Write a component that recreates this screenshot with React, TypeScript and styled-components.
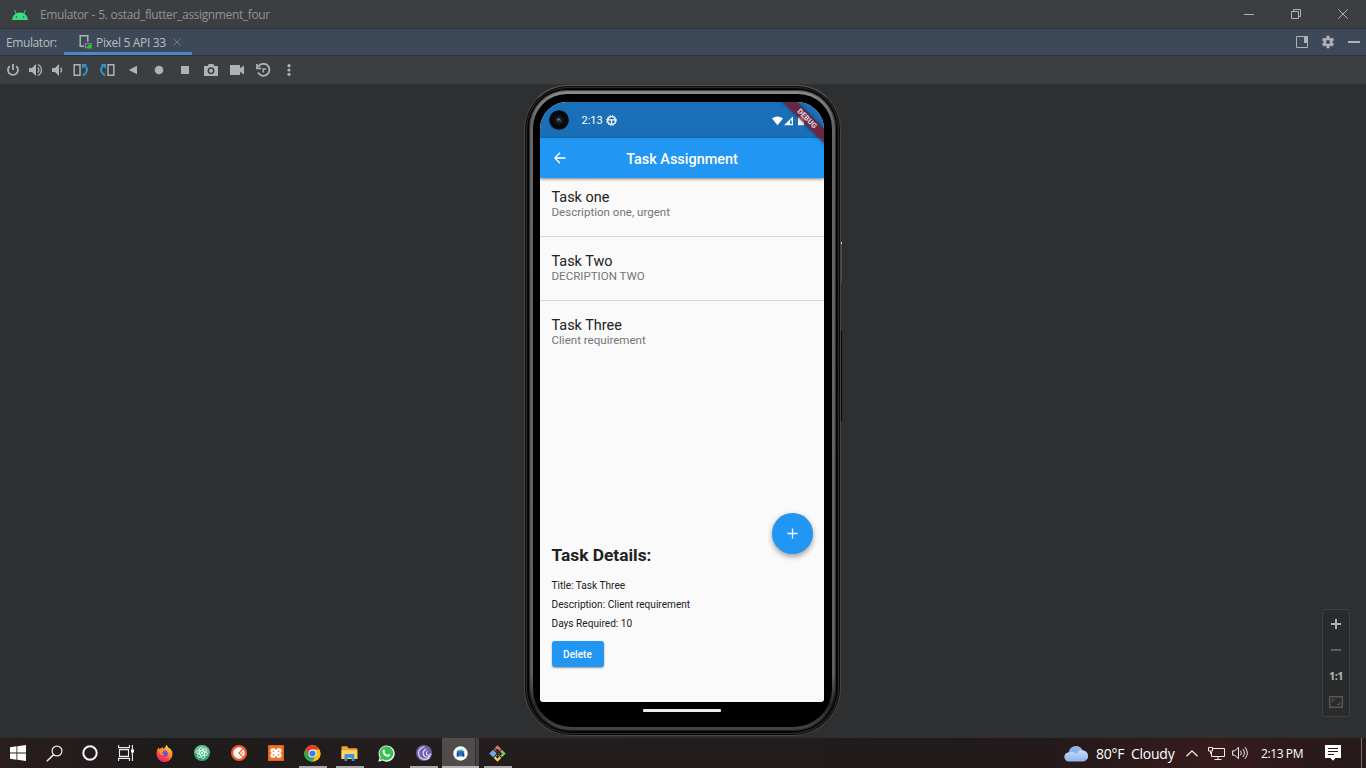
import React from "react";
import styled, { createGlobalStyle, css } from "styled-components";

const Global = createGlobalStyle`
  * { box-sizing: border-box; }
  body { margin: 0; background: #2d2f31; overflow: hidden; }
  svg { display: block; flex: none; }
`;

const Desktop = styled.div`
  width: 1366px;
  height: 768px;
  display: flex;
  flex-direction: column;
  background: #2d2f31;
  font-family: "Open Sans", "Noto Sans", sans-serif;
`;

/* ---------- IDE window chrome ---------- */

const TitleBar = styled.header`
  height: 29px;
  flex: none;
  display: flex;
  align-items: center;
  padding-left: 12px;
  background: #3c3f41;
  border-bottom: 1px solid #323232;
`;

const WindowTitle = styled.span`
  margin-left: 12px;
  padding-top: 2px;
  font-size: 12px;
  line-height: 16px;
  letter-spacing: -0.36px;
  word-spacing: 0.4px;
  color: #92928f;
  white-space: pre;
`;

const WindowButtons = styled.div`
  margin-left: auto;
  display: flex;
`;

const Slot = styled.div<{ $w: number }>`
  width: ${(p) => p.$w}px;
  flex: none;
  display: flex;
  align-items: center;
  justify-content: center;
`;

const TabBar = styled.nav`
  height: 27px;
  flex: none;
  display: flex;
  align-items: center;
  padding-left: 6px;
  background: #3d4958;
  border-bottom: 1px solid #323232;
  color: #bbbdbf;
  font-size: 12px;
  letter-spacing: -0.4px;
`;

const TabLabel = styled.span`
  width: 58px;
  padding-top: 2px;
  line-height: 16px;
  white-space: nowrap;
`;

const Tab = styled.div`
  width: 128px;
  height: 26px;
  padding: 0 9px 0 15px;
  display: flex;
  align-items: center;
  box-shadow: inset 0 -3px 0 #4a88c7;
  white-space: nowrap;
`;

const TabName = styled.span`
  width: 77px;
  margin-left: 4px;
  padding-top: 2px;
  line-height: 16px;
  letter-spacing: -0.33px;
`;

const TabActions = styled.div`
  margin-left: auto;
  display: flex;
`;

const ToolBar = styled.div`
  height: 28px;
  flex: none;
  display: flex;
  align-items: center;
  padding-left: 2px;
  background: #3c3f41;
`;

const Stage = styled.main`
  height: 654px;
  flex: none;
  display: flex;
  padding-left: 524px;
  border-top: 1px solid #313335;
`;

const ZoomPanel = styled.aside`
  width: 28px;
  height: 108px;
  margin: 524px 16px 0 auto;
  padding: 1px 0;
  border: 1px solid #3d3f40;
  border-radius: 3px;
  background: #2a2b2c;
  display: flex;
  flex-direction: column;
`;

const ZoomItem = styled.div`
  height: 26px;
  display: flex;
  align-items: center;
  justify-content: center;
  padding-bottom: 1px;
  color: #b4b4b4;
  font: bold 11px "Open Sans", sans-serif;
  letter-spacing: -0.5px;
`;

/* ---------- Phone ---------- */

const PhoneShell = styled.div`
  position: relative;
  width: 317px;
  height: 651px;
  padding: 4px 5px 4px 4px;
  border-radius: 44px 44px 48px 48px;
  border: 1px solid #464646;
  border-top-color: #585858;
  background: #050505;
  box-shadow: inset 0 0 0 1px #0b0b0b, inset 0 0 0 2px #2c2c2c, inset 0 0 0 3px #080808;
`;

const PhoneRim = styled.div`
  width: 307px;
  height: 641px;
  padding: 4px;
  border-radius: 38px 38px 42px 42px;
  background: linear-gradient(180deg, #8e8e8e 0, #666 5%, #606060 91%, #262626 96%, #484848 100%);
  box-shadow: inset 0 0 1px 1px rgba(0, 0, 0, 0.6);
`;

const PhoneGlass = styled.div`
  width: 299px;
  height: 633px;
  padding: 8px 7px 0 7px;
  border-radius: 34px 34px 38px 38px;
  background: #000;
`;

const SideKey = styled.i<{ $top: number; $h: number; $c: string }>`
  position: absolute;
  right: -2px;
  top: ${(p) => p.$top}px;
  width: 1px;
  height: ${(p) => p.$h}px;
  background: ${(p) => p.$c};
`;

const Screen = styled.div`
  position: relative;
  width: 284px;
  height: 600px;
  overflow: hidden;
  border-radius: 27px 27px 3px 3px;
  background: #fafafa;
  color: #212121;
  font-family: Roboto, sans-serif;
  display: flex;
  flex-direction: column;
`;

const StatusBar = styled.div`
  height: 36px;
  flex: none;
  padding: 0 18px 0 9px;
  display: flex;
  align-items: center;
  background: #1a70b8;
  color: #fff;
  font-size: 11px;
`;

const Clock = styled.span`
  width: 20px;
  margin: 2px 4px 0 12.5px;
  line-height: 14px;
`;

const StatusIcons = styled.div`
  margin-left: auto;
  display: flex;
  align-items: center;
  padding-top: 1px;
`;

const AppBar = styled.div`
  position: relative;
  height: 40px;
  flex: none;
  display: flex;
  align-items: center;
  justify-content: center;
  background: #2196f3;
  color: #fff;
  font-size: 14.45px;
  font-weight: 500;
  padding-top: 2px;
  box-shadow: 0 1px 3px rgba(0, 0, 0, 0.5);
`;

const BackButton = styled.div`
  position: absolute;
  left: 14px;
  top: 14px;
`;

const TaskList = styled.ul`
  height: 359px;
  margin: 0;
  padding: 0;
  list-style: none;
`;

const TaskRow = styled.li<{ $first?: boolean; $last?: boolean }>`
  height: ${(p) => (p.$first ? 59 : 64)}px;
  padding: ${(p) => (p.$first ? 12 : 17)}px 11.5px 0;
  ${(p) =>
    !p.$last &&
    css`
      border-bottom: 1px solid #d9d9d9;
    `}
`;

const TaskTitle = styled.div`
  font-size: 14.45px;
  line-height: 16px;
`;

const TaskNote = styled.div`
  margin-top: -1px;
  font-size: 11.56px;
  line-height: 14px;
  color: #757575;
`;

const Details = styled.section`
  padding: 7px 11.5px 0;
`;

const DetailsHeading = styled.h2`
  margin: 0 0 10px;
  font-size: 17.34px;
  line-height: 22px;
  font-weight: 700;
`;

const DetailsLine = styled.p`
  margin: 0;
  font-size: 10.12px;
  line-height: 19px;
`;

const DeleteButton = styled.button`
  display: block;
  width: 52px;
  height: 26px;
  margin-top: 8px;
  padding: 0;
  border: 0;
  border-radius: 3px;
  background: #2196f3;
  color: #fff;
  font: 500 10.12px Roboto, sans-serif;
  box-shadow: 0 1px 2px rgba(0, 0, 0, 0.4);
`;

const Fab = styled.div`
  position: absolute;
  right: 11.5px;
  top: 411px;
  width: 40.5px;
  height: 40.5px;
  border-radius: 50%;
  background: #2196f3;
  display: flex;
  align-items: center;
  justify-content: center;
  box-shadow: 0 3px 5px rgba(0, 0, 0, 0.28), 0 1px 7px rgba(0, 0, 0, 0.1);
`;

const DebugRibbon = styled.div`
  position: absolute;
  left: 227px;
  top: 12px;
  width: 80px;
  height: 9.5px;
  transform: rotate(45deg);
  background: rgba(130, 16, 30, 0.76);
  box-shadow: 0 0 4px rgba(0, 0, 0, 0.45);
  color: #d3c6cd;
  font-size: 7.6px;
  font-weight: 900;
  line-height: 10px;
  text-align: center;
`;

const HomeBar = styled.div`
  width: 78px;
  height: 3px;
  margin: 7px 0 0 103px;
  border-radius: 1px;
  background: #ececec;
`;

/* ---------- Windows taskbar ---------- */

const TaskBar = styled.footer`
  height: 30px;
  flex: none;
  display: flex;
  align-items: stretch;
  background: linear-gradient(90deg, #2a1d1d 0, #1e1b1b 12%, #241d1d 28%, #231c1c 55%, #201a1b 70%, #271a1b 80%, #371b1d 89%, #2c1a1b 95%, #261a1b 100%);
  color: #fff;
`;

const PinnedApps = styled.div`
  display: flex;
  margin-left: 2px;
`;

const AppSlot = styled.div<{ $running?: boolean; $active?: boolean }>`
  width: 37px;
  display: flex;
  align-items: center;
  justify-content: center;
  ${(p) =>
    p.$running &&
    css`
      background: linear-gradient(#aaa7a7, #aaa7a7) center bottom / 28px 2px no-repeat;
    `}
  ${(p) =>
    p.$active &&
    css`
      background: linear-gradient(#b5b2b2, #b5b2b2) left bottom / 100% 2px no-repeat,
        linear-gradient(90deg, #514c4c 0 33px, #322d2d 33px 34px, #474242 34px);
    `}
`;

const Tray = styled.div`
  margin-left: auto;
  display: flex;
  align-items: center;
`;

const Weather = styled.span`
  width: 88px;
  padding-left: 7px;
  font-size: 14px;
  letter-spacing: -0.25px;
  white-space: pre;
`;

const TrayClock = styled.span`
  width: 60px;
  padding-left: 5px;
  font-size: 12px;
  letter-spacing: -0.4px;
  white-space: nowrap;
`;

const ShowDesktop = styled.i`
  align-self: stretch;
  width: 5px;
  border-left: 1px solid #75696a;
`;

const G = "#afb1b3";

const AndroidHead = () => (
  <svg width="16" height="11" viewBox="0 0 16 11">
    <path d="M0 11a8 7.5 0 0 1 16 0z" fill="#3ddc84" />
    <path d="M4.2 5 2.6 1M11.8 5l1.6-4" stroke="#3ddc84" strokeWidth=".9" />
    <circle cx="4.4" cy="8" r=".8" fill="#3c3f41" />
    <circle cx="11.6" cy="8" r=".8" fill="#3c3f41" />
  </svg>
);

const toolIcons: { w: number; node: React.ReactNode }[] = [
  {
    w: 22,
    node: (
      <svg width="14" height="14" viewBox="0 0 14 14" fill="none" stroke={G} strokeWidth="1.8">
        <path d="M3.7 3.2a5 5 0 1 0 6.6 0M7 1v6" />
      </svg>
    ),
  },
  {
    w: 23,
    node: (
      <svg width="14" height="14" viewBox="0 0 14 14">
        <path d="M0 5h3l4-4v12L3 9H0z" fill={G} />
        <path d="M8.6 4.5a3 3 0 0 1 0 5M8.8 1.7a5.7 5.7 0 0 1 0 10.6" fill="none" stroke={G} strokeWidth="1.3" />
      </svg>
    ),
  },
  {
    w: 21,
    node: (
      <svg width="12" height="14" viewBox="0 0 12 14">
        <path d="M0 5h3l4-4v12L3 9H0z" fill={G} />
        <path d="M8.6 4.6q2 2.4 0 4.8" fill="none" stroke={G} strokeWidth="1.3" />
      </svg>
    ),
  },
  {
    w: 26,
    node: (
      <svg width="16" height="14" viewBox="0 0 16 14" fill="none">
        <path d="M1.200 1.700h5.800v10.600H1.200z" stroke={G} strokeWidth="1.500" />
        <path d="M11.500 2.300Q17.200 7.500 10 12.600" stroke="#3592c4" strokeWidth="2" />
        <path d="M9 1h5.200L9 6z" fill="#3592c4" />
      </svg>
    ),
  },
  {
    w: 26,
    node: (
      <svg width="16" height="14" viewBox="0 0 16 14" fill="none">
        <path d="M9 1.700h5.800v10.600H9z" stroke={G} strokeWidth="1.500" />
        <path d="M4.500 2.300Q-1.200 7.500 6 12.600" stroke="#3592c4" strokeWidth="2" />
        <path d="M7 1H1.800L7 6z" fill="#3592c4" />
      </svg>
    ),
  },
  {
    w: 26,
    node: (
      <svg width="10" height="10" viewBox="0 0 10 10">
        <path d="M.8 5 9 .8v8.4z" fill={G} />
      </svg>
    ),
  },
  {
    w: 26,
    node: (
      <svg width="10" height="10" viewBox="0 0 10 10">
        <circle cx="5" cy="5" r="4.3" fill={G} />
      </svg>
    ),
  },
  {
    w: 26,
    node: (
      <svg width="8" height="8" viewBox="0 0 8 8">
        <path d="M0 0h8v8H0z" fill={G} />
      </svg>
    ),
  },
  {
    w: 26,
    node: (
      <svg width="14" height="12" viewBox="0 0 14 12">
        <path d="M0 2h3.5l1.3-2h4.4l1.3 2H14v10H0z" fill={G} />
        <circle cx="7" cy="6.8" r="2.7" fill="none" stroke="#3c3f41" strokeWidth="1.5" />
      </svg>
    ),
  },
  {
    w: 26,
    node: (
      <svg width="14" height="10" viewBox="0 0 14 10">
        <path d="M0 0h10v3.3L14 .5v9l-4-2.8V10H0z" fill={G} />
      </svg>
    ),
  },
  {
    w: 26,
    node: (
      <svg width="15" height="14" viewBox="0 0 15 14" fill="none" stroke={G}>
        <path d="M2.2 3.8A6 6 0 1 1 2 9.4" strokeWidth="1.8" />
        <path d="M.9 1v4.3h4.3" strokeWidth="1.7" />
        <path d="M7.2 9.500V6H10" strokeWidth="1.4" />
      </svg>
    ),
  },
  {
    w: 26,
    node: (
      <svg width="4" height="12" viewBox="0 0 4 12" fill={G}>
        <circle cx="2" cy="1.7" r="1.6" />
        <circle cx="2" cy="6" r="1.6" />
        <circle cx="2" cy="10.3" r="1.6" />
      </svg>
    ),
  },
];

const Start = () => (
  <svg width="16" height="16" viewBox="0 0 16 16" fill="#fff">
    <path d="M0 2.3 6.5 1.3v6.3H0zM7.3 1.2 16 0v7.6H7.3zM0 8.4h6.5v6.3L0 13.7zM7.3 8.4H16V16l-8.7-1.2z" />
  </svg>
);
const Search = () => (
  <svg width="17" height="17" viewBox="0 0 17 17" fill="none" stroke="#eee" strokeWidth="1.2">
    <circle cx="11" cy="6" r="4.9" />
    <path d="M7.6 9.6.8 16.2" strokeWidth="1.5" />
  </svg>
);
const Cortana = () => (
  <svg width="16" height="16" viewBox="0 0 16 16">
    <circle cx="8" cy="8" r="6.7" fill="none" stroke="#f5f5f5" strokeWidth="2" />
  </svg>
);
const TaskView = () => (
  <svg width="16" height="16" viewBox="0 0 16 16" fill="none" stroke="#eee" strokeWidth="1.1">
    <path d="M.6 0v2.6h10.8V0M.6 16v-2.6h10.8V16M1.5 4.6h9v6.8h-9zM14.4 0v16" />
    <path d="M13 4.5h3v3h-3z" fill="#fff" stroke="none" />
  </svg>
);

const Firefox = () => (
  <svg width="17" height="17" viewBox="0 0 17 17">
    <defs>
      <linearGradient id="ff" x1=".8" y1="0" x2=".25" y2="1">
        <stop offset="0" stopColor="#ffe14a" />
        <stop offset=".45" stopColor="#ff8b22" />
        <stop offset=".75" stopColor="#fb3a4c" />
        <stop offset="1" stopColor="#e31587" />
      </linearGradient>
    </defs>
    <path d="M10.2 0q1.5 1 2 2.4Q16.5 4.8 16.5 9a8 8 0 0 1-16 .2Q.4 5 2.5 2.3l.5 1.8q1-.9 2.2-.9.4-1 1.2-1.5 0 1.4 1.1 2.1Q10 3 10.2 0z" fill="url(#ff)" />
    <path d="M6 6.2q3-2 5.3.5 1.4 2-.2 4.2Q8.7 12.8 6 11 4.2 9.2 5 7l2 .4z" fill="#8446d8" />
    <path d="M3 5.6q2-1.2 4 .4l1 1-2.3.8Q6.5 10 9 9.3q-1.6 2-4 .5Q3 8 3 5.6z" fill="#ff9b25" />
  </svg>
);
const Atom = () => (
  <svg width="16" height="16" viewBox="0 0 16 16">
    <circle cx="8" cy="8" r="8" fill="#36a473" />
    <path d="M0 8a8 8 0 0 1 16 0q-8 3-16 0z" fill="#8fd0ad" opacity=".55" />
    <g fill="none" stroke="#e3fff1" strokeWidth=".9">
      <ellipse cx="8" cy="8" rx="5.7" ry="2.3" transform="rotate(15 8 8)" />
      <ellipse cx="8" cy="8" rx="5.7" ry="2.3" transform="rotate(75 8 8)" />
      <ellipse cx="8" cy="8" rx="5.7" ry="2.3" transform="rotate(135 8 8)" />
    </g>
    <circle cx="8" cy="8" r="1" fill="#fff" />
  </svg>
);
const ClockApp = () => (
  <svg width="16" height="16" viewBox="0 0 16 16">
    <circle cx="8" cy="8" r="8" fill="#f4592b" />
    <circle cx="8" cy="8" r="5.700" fill="#fff" />
    <path d="M12.500 3.600 8 8l4.500 4.400" fill="none" stroke="#f4592b" strokeWidth="1.200" />
    <circle cx="11.500" cy="8" r="1" fill="#f79a7c" />
  </svg>
);
const Xampp = () => (
  <svg width="16" height="16" viewBox="0 0 16 16">
    <rect width="16" height="16" rx="1.5" fill="#f37623" />
    <path d="M.7.7h14.6v14.6H.7z" fill="none" stroke="#dd5e12" strokeWidth="1" />
    <path
      d="M4.700 3.300h1.600L8 5l1.700-1.700h1.600q2.300 0 2.300 2.200 0 1.600-1.300 2.500 1.300.9 1.300 2.500 0 2.200-2.300 2.200H9.700L8 11l-1.700 1.700H4.700q-2.300 0-2.300-2.200 0-1.600 1.300-2.500-1.300-.9-1.300-2.500 0-2.200 2.300-2.200z"
      fill="#fff"
    />
    <path d="M4.700 5.700h1.600v1.100H4.700zM9.700 5.700h1.600v1.100H9.700zM4.700 9.300h1.600v1.100H4.700zM9.700 9.300h1.600v1.100H9.700z" fill="#f37623" />
  </svg>
);
const Chrome = () => (
  <svg width="17" height="17" viewBox="0 0 17 17">
    <circle cx="8.5" cy="8.500" r="8.200" fill="#fbc116" />
    <path d="M1.400 4.400A8.200 8.200 0 0 1 15.600 4.400H8.500L5 10.500z" fill="#e33b2e" />
    <path d="M1.400 4.400A8.200 8.200 0 0 0 8.200 16.700L12 10.500 5 10.600z" fill="#2da94f" />
    <circle cx="8.500" cy="8.500" r="4" fill="#fff" />
    <circle cx="8.500" cy="8.500" r="3.100" fill="#3d7df0" />
  </svg>
);
const Explorer = () => (
  <svg width="17" height="15" viewBox="0 0 17 15">
    <path d="M.5 1Q.5.300 1.200.300h5l1.300 2h8q.8 0 .8.800V13H.5z" fill="#e9a82c" />
    <path d="M.5 4.200h15.800V13H.5z" fill="#fdd264" />
    <path d="M3.500 15V9q0-1 1-1h7.800q1 0 1 1v6h-2.600v-3.200H6.100V15z" fill="#3b93dc" />
  </svg>
);
const WhatsApp = () => (
  <svg width="17" height="17" viewBox="0 0 17 17">
    <path d="M.3 16.700 1.500 12.400A8.100 8.100 0 1 1 4.600 15.600z" fill="#f3f3f3" />
    <path d="M1.900 15.100 2.700 12.200A6.900 6.900 0 1 1 5 14.300z" fill="#37c351" />
    <path d="M5.200 4.700q.8-.8 1.300.1l.6 1.400-.7 1q1 2 2.900 2.700l.9-1 1.900.9q-.1 2-2.100 2-4.900-.7-5.500-5-.1-1.300.7-2.100z" fill="#fff" />
  </svg>
);
const BitTorrent = () => (
  <svg width="16" height="16" viewBox="0 0 16 16" fill="none">
    <circle cx="8" cy="8" r="8" fill="#6e60a8" />
    <g stroke="#ded8f2" strokeWidth="1.200">
      <path d="M8.500 2A6 6 0 0 0 9 14.400Q11.500 14.500 13.500 12.800" />
      <path d="M10.200 4.200A4.200 4.200 0 0 0 10 12.200Q12.500 12.500 14.500 11" />
      <path d="M11.500 6.200A2.300 2.300 0 0 0 11.300 10Q13.500 10.500 15.300 9" />
    </g>
  </svg>
);
const Studio = () => (
  <svg width="15" height="15" viewBox="0 0 15 15">
    <circle cx="7.500" cy="7.500" r="7.200" fill="#fff" />
    <path d="M3.800 4.800h7.400v5.700H3.800z" fill="#2f7fd8" />
    <path d="M5 3.600h5v1.600H5z" fill="#4fb987" />
    <path d="M3.800 7.500 5.500 6v4.500H3.800zM9.500 6l1.700 1.500v3H9.500z" fill="#1d4468" />
    <circle cx="7.500" cy="7" r="1.700" fill="#1a6dcc" />
  </svg>
);
const Git = () => (
  <svg width="17" height="17" viewBox="0 0 17 17">
    <g transform="rotate(45 8.500 8.500)">
      <path d="M2.700 2.700h5.300v5.300H2.700z" fill="#ef6a6a" />
      <path d="M9 2.700h5.300v5.300H9z" fill="#86c75a" />
      <path d="M2.700 9h5.300v5.300H2.700z" fill="#70a7ec" />
      <path d="M9 9h5.300v5.300H9z" fill="#f3d05e" />
    </g>
    <g stroke="#2b1d1a" strokeWidth="1" fill="#2b1d1a">
      <path d="M5.500 3 11.500 8.500M8.500 5.500v7" />
      <circle cx="8.500" cy="5.500" r="1" />
      <circle cx="8.500" cy="11.800" r="1" />
      <circle cx="11.500" cy="8.700" r="1" />
    </g>
  </svg>
);

const apps = [
  { icon: <Firefox /> },
  { icon: <Atom /> },
  { icon: <ClockApp /> },
  { icon: <Xampp /> },
  { icon: <Chrome />, running: true },
  { icon: <Explorer />, running: true },
  { icon: <WhatsApp /> },
  { icon: <BitTorrent />, running: true },
  { icon: <Studio />, active: true },
  { icon: <Git />, running: true },
];

const tasks = [
  { title: "Task one", note: "Description one, urgent" },
  { title: "Task Two", note: "DECRIPTION TWO" },
  { title: "Task Three", note: "Client requirement" },
];

const CameraHole = () => (
  <svg width="20" height="20" viewBox="0 0 20 20">
    <circle cx="10" cy="10" r="9.800" fill="#08090a" />
    <circle cx="10" cy="10" r="5" fill="#14151a" />
    <circle cx="10" cy="10" r="2.600" fill="#262b3d" />
    <circle cx="9.600" cy="9.600" r="1" fill="#8c93b0" />
    <circle cx="11.500" cy="11" r=".6" fill="#565d80" />
  </svg>
);

function Phone() {
  return (
    <PhoneShell>
      <SideKey $top={156} $h={2} $c="#ddd" />
      <SideKey $top={158} $h={39} $c="#4c4c4c" />
      <SideKey $top={245} $h={90} $c="#050505" />
      <PhoneRim>
        <PhoneGlass>
          <Screen>
            <StatusBar>
              <CameraHole />
              <Clock>2:13</Clock>
              <svg width="11" height="11" viewBox="0 0 10 10" fill="none" stroke="#fff">
                <circle cx="5" cy="5" r="3.600" strokeWidth="1.200" />
                <circle cx="5" cy="5" r="4.500" strokeWidth=".9" strokeDasharray="1.200 1.156" />
                <path d="M1.500 4.500h7M5 4.500V8.500" strokeWidth="1.100" />
              </svg>
              <StatusIcons>
                <svg width="34" height="10" viewBox="0 0 34 10">
                  <path d="M0 2.600Q5.500-1.600 11 2.600L5.500 9.300z" fill="#fff" />
                  <path d="M12 9.300 21 .4v8.900z" fill="#fff" />
                  <path d="M18 4.500h1.700v3.600H18z" fill="#1a70b8" />
                  <path d="M26 1.300h1.500V.2h3v1.100H32v8h-6z" fill="#fff" />
                </svg>
              </StatusIcons>
            </StatusBar>
            <AppBar>
              <BackButton>
                <svg width="12" height="12" viewBox="0 0 12 12" fill="none" stroke="#fff" strokeWidth="1.400">
                  <path d="M11.500 6H1M6 .8.900 6 6 11.200" />
                </svg>
              </BackButton>
              Task Assignment
            </AppBar>
            <TaskList>
              {tasks.map((t, i) => (
                <TaskRow key={t.title} $first={i === 0} $last={i === tasks.length - 1}>
                  <TaskTitle>{t.title}</TaskTitle>
                  <TaskNote>{t.note}</TaskNote>
                </TaskRow>
              ))}
            </TaskList>
            <Details>
              <DetailsHeading>Task Details:</DetailsHeading>
              <DetailsLine>Title: Task Three</DetailsLine>
              <DetailsLine>Description: Client requirement</DetailsLine>
              <DetailsLine>Days Required: 10</DetailsLine>
              <DeleteButton>Delete</DeleteButton>
            </Details>
            <Fab>
              <svg width="11" height="11" viewBox="0 0 11 11" stroke="#fff" strokeWidth="1.300">
                <path d="M5.500.5v10M.5 5.500h10" />
              </svg>
            </Fab>
            <DebugRibbon>DEBUG</DebugRibbon>
          </Screen>
          <HomeBar />
        </PhoneGlass>
      </PhoneRim>
    </PhoneShell>
  );
}

export default function App() {
  return (
    <Desktop>
      <Global />
      <TitleBar>
        <AndroidHead />
        <WindowTitle>Emulator - 5. ostad_flutter_assignment_four</WindowTitle>
        <WindowButtons>
          <Slot $w={47}>
            <svg width="10" height="10" viewBox="0 0 10 10">
              <path d="M0 5h10v1H0z" fill="#b0b0b0" />
            </svg>
          </Slot>
          <Slot $w={47}>
            <svg width="10" height="10" viewBox="0 0 10 10" fill="none" stroke="#b0b0b0">
              <path d="M.5 2.500h7v7h-7zM2.500 2.500v-2h7v7h-2" />
            </svg>
          </Slot>
          <Slot $w={47}>
            <svg width="10" height="10" viewBox="0 0 10 10" stroke="#b0b0b0">
              <path d="M.3.300 9.700 9.700M9.700.300.300 9.700" />
            </svg>
          </Slot>
        </WindowButtons>
      </TitleBar>
      <TabBar>
        <TabLabel>Emulator:</TabLabel>
        <Tab>
          <svg width="13" height="14" viewBox="0 0 13 14" fill="none">
            <path d="M5 11.300H1.200V.8h7.600v6" stroke={G} strokeWidth="1.500" />
            <path d="M6.500 8.600h5.500v3.900H6.500z" stroke="#9876aa" strokeWidth="1.300" />
            <circle cx="10.600" cy="11.700" r="2" fill="#00e800" />
          </svg>
          <TabName>Pixel 5 API 33</TabName>
          <svg width="8" height="8" viewBox="0 0 8 8" stroke="#6d7882">
            <path d="m.5.500 7 7M7.500.500l-7 7" />
          </svg>
        </Tab>
        <TabActions>
          <Slot $w={26}>
            <svg width="12" height="12" viewBox="0 0 12 12">
              <path d="M.5.500h11v11H.5z" fill="none" stroke={G} />
              <path d="M8 0h4v7H8z" fill={G} />
            </svg>
          </Slot>
          <Slot $w={26}>
            <svg width="12" height="14" viewBox="0 0 12 14">
              <g stroke={G} strokeWidth="3">
                <path d="M6 .8v12.400M.7 3.900l10.600 6.200M.7 10.100l10.600-6.200" />
              </g>
              <circle cx="6" cy="7" r="4.500" fill={G} />
              <circle cx="6" cy="7" r="2" fill="#3d4958" />
            </svg>
          </Slot>
          <Slot $w={25}>
            <svg width="12" height="2" viewBox="0 0 12 2">
              <path d="M0 0h12v2H0z" fill={G} />
            </svg>
          </Slot>
        </TabActions>
      </TabBar>
      <ToolBar>
        {toolIcons.map((t, i) => (
          <Slot key={i} $w={t.w}>
            {t.node}
          </Slot>
        ))}
      </ToolBar>
      <Stage>
        <Phone />
        <ZoomPanel>
          <ZoomItem>
            <svg width="10" height="10" viewBox="0 0 10 10" fill="#b4b4b4">
              <path d="M4 0h2v4h4v2H6v4H4V6H0V4h4z" />
            </svg>
          </ZoomItem>
          <ZoomItem>
            <svg width="10" height="2" viewBox="0 0 10 2" fill="#5d5d5d">
              <path d="M0 0h10v2H0z" />
            </svg>
          </ZoomItem>
          <ZoomItem>1:1</ZoomItem>
          <ZoomItem>
            <svg width="14" height="12" viewBox="0 0 14 12" fill="none" stroke="#585858">
              <path d="M.7.700h12.600v10.600H.7z" strokeWidth="1.400" />
              <path d="M3.500 6V3.500H6M8 8.500h2.500V6" />
            </svg>
          </ZoomItem>
        </ZoomPanel>
      </Stage>
      <TaskBar>
        <Slot $w={36}>
          <Start />
        </Slot>
        <Slot $w={36}>
          <Search />
        </Slot>
        <Slot $w={36}>
          <Cortana />
        </Slot>
        <Slot $w={36}>
          <TaskView />
        </Slot>
        <PinnedApps>
          {apps.map((a, i) => (
            <AppSlot key={i} $running={a.running} $active={a.active}>
              {a.icon}
            </AppSlot>
          ))}
        </PinnedApps>
        <Tray>
          <svg width="25" height="17" viewBox="0 0 25 17">
            <defs>
              <linearGradient id="cloud" x1="0" y1="0" x2="0" y2="1">
                <stop offset="0" stopColor="#dcebff" />
                <stop offset="1" stopColor="#8fb4ea" />
              </linearGradient>
            </defs>
            <path d="M5 16.500A4.600 4.600 0 0 1 4.800 7.300 7.300 7.300 0 0 1 18.500 5.200 5.700 5.700 0 0 1 19.500 16.500z" fill="url(#cloud)" />
            <path d="M4.800 7.300A7.300 7.300 0 0 1 18.300 5Q14 5 12.500 9 9 5.800 4.800 7.300z" fill="#7ea2e0" opacity=".75" />
          </svg>
          <Weather>80°F  Cloudy</Weather>
          <Slot $w={30}>
            <svg width="12" height="7" viewBox="0 0 12 7" fill="none" stroke="#eee" strokeWidth="1.300">
              <path d="M.5 6.300 6 .9l5.500 5.400" />
            </svg>
          </Slot>
          <Slot $w={18}>
            <svg width="17" height="15" viewBox="0 0 17 15" fill="none" stroke="#eee">
              <path d="M5 2.500h11.500v8H3.500V6M10 10.500v3M6.500 13.500h7M.5 1.500h4v3.500h-4zM2.500 5v2.500h1" />
            </svg>
          </Slot>
          <Slot $w={31}>
            <svg width="17" height="14" viewBox="0 0 17 14" fill="none" stroke="#eee">
              <path d="M.6 4.800h2.200l3.700-3.500v11.400L2.800 9.200H.6zM8.500 4.800q1.800 2.200 0 4.400M10.800 3q3.200 4 0 8M13 1.200q4.600 5.800 0 11.600" />
            </svg>
          </Slot>
          <TrayClock>2:13 PM</TrayClock>
          <Slot $w={33}>
            <svg width="16" height="16" viewBox="0 0 16 16">
              <path d="M0 0h16v13h-5.500L8 15.800 5.500 13H0z" fill="#fff" />
              <path d="M3 3.500h10M3 6.500h10M3 9.500h6" stroke="#2c1a1b" />
            </svg>
          </Slot>
          <Slot $w={12} />
          <ShowDesktop />
        </Tray>
      </TaskBar>
    </Desktop>
  );
}
